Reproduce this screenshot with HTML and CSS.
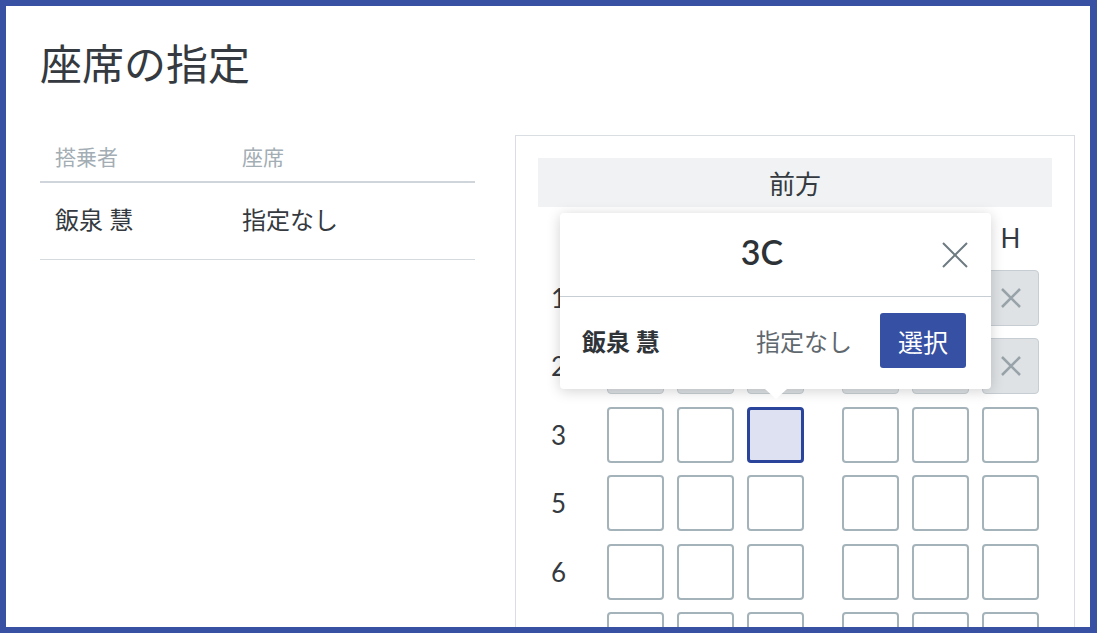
FILE: index.html
```html
<!DOCTYPE html>
<html lang="ja">
<head>
<meta charset="utf-8">
<title>座席の指定</title>
<link rel="stylesheet" href="styles.css">
</head>
<body>
<div class="frame">
  <h1 class="title">座席の指定</h1>
  <div class="content">
    <div class="passengers">
      <div class="prow phead"><div class="cell">搭乗者</div><div class="cell">座席</div></div>
      <div class="prow"><div class="cell">飯泉 慧</div><div class="cell">指定なし</div></div>
    </div>
    <div class="panel">
      <div class="front">前方</div>
      <div class="seatmap">
        <div class="srow shead">
          <div class="rlabel"></div>
          <div class="group"><div class="col">A</div><div class="col">B</div><div class="col">C</div></div>
          <div class="group"><div class="col">F</div><div class="col">G</div><div class="col">H</div></div>
        </div>
        <div class="srow">
          <div class="rlabel">1</div>
          <div class="group">
            <div class="seat na"><svg viewBox="0 0 20 20" class="x"><path d="M1 1L19 19M19 1L1 19"/></svg></div>
            <div class="seat na"><svg viewBox="0 0 20 20" class="x"><path d="M1 1L19 19M19 1L1 19"/></svg></div>
            <div class="seat na"><svg viewBox="0 0 20 20" class="x"><path d="M1 1L19 19M19 1L1 19"/></svg></div>
          </div>
          <div class="group">
            <div class="seat na"><svg viewBox="0 0 20 20" class="x"><path d="M1 1L19 19M19 1L1 19"/></svg></div>
            <div class="seat na"><svg viewBox="0 0 20 20" class="x"><path d="M1 1L19 19M19 1L1 19"/></svg></div>
            <div class="seat na"><svg viewBox="0 0 20 20" class="x"><path d="M1 1L19 19M19 1L1 19"/></svg></div>
          </div>
        </div>
        <div class="srow">
          <div class="rlabel">2</div>
          <div class="group">
            <div class="seat na"><svg viewBox="0 0 20 20" class="x"><path d="M1 1L19 19M19 1L1 19"/></svg></div>
            <div class="seat na"><svg viewBox="0 0 20 20" class="x"><path d="M1 1L19 19M19 1L1 19"/></svg></div>
            <div class="seat na"><svg viewBox="0 0 20 20" class="x"><path d="M1 1L19 19M19 1L1 19"/></svg></div>
          </div>
          <div class="group">
            <div class="seat na"><svg viewBox="0 0 20 20" class="x"><path d="M1 1L19 19M19 1L1 19"/></svg></div>
            <div class="seat na"><svg viewBox="0 0 20 20" class="x"><path d="M1 1L19 19M19 1L1 19"/></svg></div>
            <div class="seat na"><svg viewBox="0 0 20 20" class="x"><path d="M1 1L19 19M19 1L1 19"/></svg></div>
          </div>
        </div>
        <div class="srow">
          <div class="rlabel">3</div>
          <div class="group"><div class="seat"></div><div class="seat"></div><div class="seat sel"></div></div>
          <div class="group"><div class="seat"></div><div class="seat"></div><div class="seat"></div></div>
        </div>
        <div class="srow">
          <div class="rlabel">5</div>
          <div class="group"><div class="seat"></div><div class="seat"></div><div class="seat"></div></div>
          <div class="group"><div class="seat"></div><div class="seat"></div><div class="seat"></div></div>
        </div>
        <div class="srow">
          <div class="rlabel">6</div>
          <div class="group"><div class="seat"></div><div class="seat"></div><div class="seat"></div></div>
          <div class="group"><div class="seat"></div><div class="seat"></div><div class="seat"></div></div>
        </div>
        <div class="srow">
          <div class="rlabel">7</div>
          <div class="group"><div class="seat"></div><div class="seat"></div><div class="seat"></div></div>
          <div class="group"><div class="seat"></div><div class="seat"></div><div class="seat"></div></div>
        </div>
      </div>
      <div class="popup">
        <div class="pop-head">
          <div class="pop-title">3C</div>
          <svg class="pop-close" viewBox="0 0 26 26"><path d="M1 1L25 25M25 1L1 25"/></svg>
        </div>
        <div class="pop-body">
          <div class="pop-name">飯泉 慧</div>
          <div class="pop-status">指定なし</div>
          <button class="btn">選択</button>
        </div>
      </div>
    </div>
  </div>
</div>
</body>
</html>
```
FILE: styles.css
```css
* { box-sizing: border-box; }
body {
  margin: 0;
  font-family: Lato, "Noto Sans CJK JP", sans-serif;
  color: #343a40;
  background: #fff;
}
.frame {
  width: 1097px;
  height: 633px;
  border: 6px solid #3851a3;
  border-right-width: 7px;
  overflow: hidden;
  padding: 32px 15px 0 34px;
  background: #fff;
}
.title {
  margin: 0 0 45px;
  font-size: 42px;
  line-height: 52px;
  font-weight: 400;
  color: #343a40;
}
.content {
  display: flex;
  gap: 40px;
  align-items: flex-start;
}
.passengers { width: 435px; flex: none; }
.prow {
  display: grid;
  grid-template-columns: 187px 1fr;
  align-items: center;
  height: 77px;
  padding-bottom: 5px;
  border-bottom: 1px solid #d5dadf;
  font-size: 24px;
}
.prow .cell { padding-left: 15px; }
.phead {
  height: 48px;
  padding-bottom: 4px;
  border-bottom: 2px solid #cfd5da;
  font-size: 21px;
  color: #a3adb4;
}
.panel {
  position: relative;
  width: 560px;
  height: 620px;
  flex: none;
  border: 1px solid #d9dee2;
  padding: 22px;
}
.front {
  height: 49px;
  background: #f0f2f4;
  display: flex;
  align-items: center;
  justify-content: center;
  font-size: 26px;
}
.seatmap {
  display: flex;
  flex-direction: column;
  gap: 12.5px;
  margin-top: 11px;
}
.srow {
  display: flex;
  align-items: center;
  height: 56px;
}
.shead { height: 39px; }
.rlabel {
  width: 69px;
  padding-left: 13px;
  font-size: 26px;
}
.group { display: flex; gap: 13px; }
.group + .group { margin-left: 38px; }
.col { width: 57px; text-align: center; font-size: 26px; }
.seat {
  width: 57px;
  height: 56px;
  border: 2px solid #a4b3ba;
  border-radius: 4px;
  background: #fff;
}
.seat.na {
  background: #dee2e5;
  border: 1.5px solid #c6ced3;
  display: flex;
  align-items: center;
  justify-content: center;
}
.seat.sel {
  background: #dde1f1;
  border: 3px solid #2a439b;
}
.x {
  width: 20px;
  height: 20px;
  fill: none;
  stroke: #97a3a9;
  stroke-width: 2.5;
}
.popup {
  position: absolute;
  left: 44px;
  top: 77px;
  width: 431px;
  background: #fff;
  border-radius: 4px;
  box-shadow: 0 2px 14px rgba(0, 0, 0, 0.18);
}
.popup::after {
  content: "";
  position: absolute;
  left: 205px;
  top: 100%;
  border-left: 11px solid transparent;
  border-right: 11px solid transparent;
  border-top: 10px solid #fff;
}
.pop-head {
  height: 84px;
  display: flex;
  align-items: center;
  padding: 0 23px 0 22px;
  border-bottom: 1px solid #c8cfd4;
}
.pop-title {
  flex: 1;
  text-align: center;
  font-size: 34px;
  font-weight: 600;
  margin-bottom: 6px;
  color: #2c3236;
}
.pop-close {
  width: 26px;
  height: 26px;
  fill: none;
  stroke: #6e7a82;
  stroke-width: 2;
}
.pop-body {
  height: 92px;
  display: flex;
  align-items: center;
  padding: 0 25px 5px 22px;
}
.pop-name {
  flex: 1;
  font-weight: 700;
  font-size: 24px;
  color: #2f3438;
}
.pop-status {
  color: #5f686e;
  font-size: 24px;
  margin-right: 28px;
}
.btn {
  width: 86px;
  height: 55px;
  border: 0;
  border-radius: 3px;
  background: #3650a3;
  color: #fff;
  font-family: inherit;
  font-size: 25px;
  display: flex;
  align-items: center;
  justify-content: center;
  padding: 0;
}
```
